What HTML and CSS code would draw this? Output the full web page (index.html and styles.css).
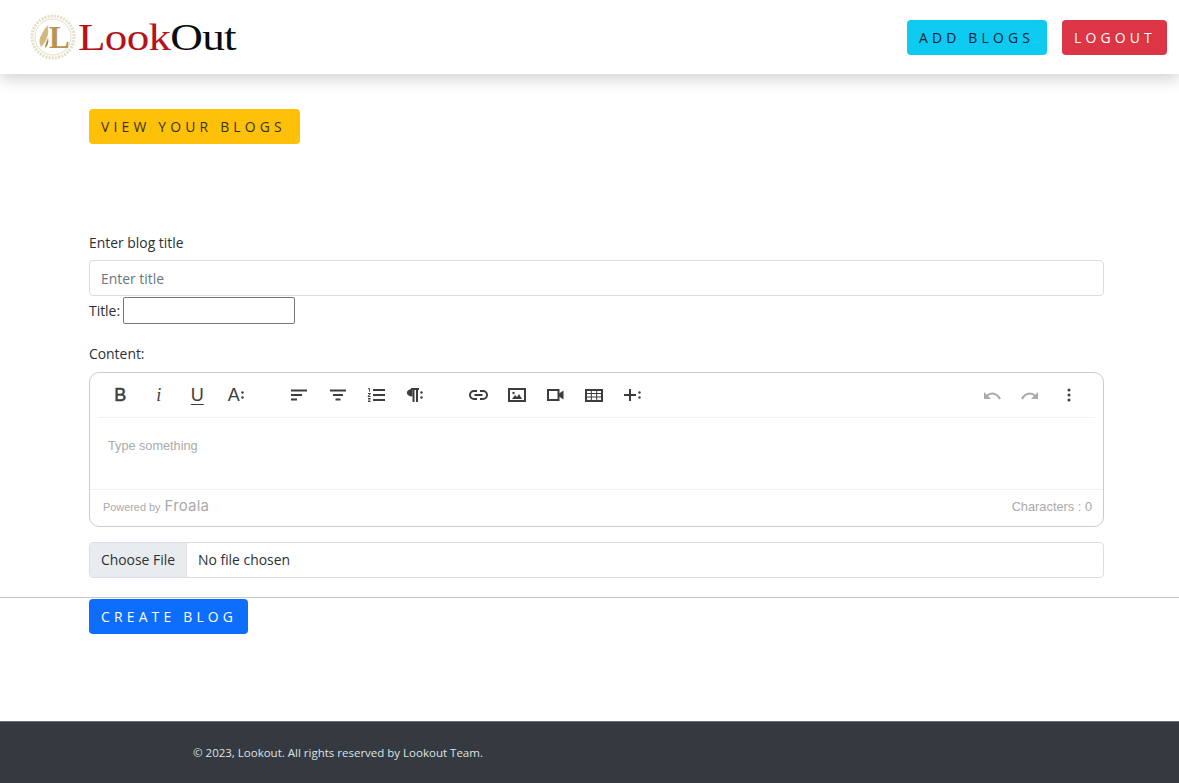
FILE: index.html
```html
<!DOCTYPE html>
<html lang="en">
<head>
<meta charset="utf-8">
<title>LookOut</title>
<link rel="stylesheet" href="styles.css">
</head>
<body>
<header class="topbar">
  <a class="logo" href="#">
    <svg class="logo-mark" width="46" height="46" viewBox="0 0 46 46">
      <circle cx="23" cy="23" r="21" fill="#fff" stroke="#e3dfc6" stroke-width="3" stroke-dasharray="2 1.2"/>
      <circle cx="23" cy="23" r="18" fill="none" stroke="#e2dec6" stroke-width="1"/>
      <path d="M11 33c-3-6-1-10 1-13 1-3 3-6 6-9-1 3 1 6 0 9-1 5-3 9-7 13z" fill="#d4b97f"/>
      <path d="M15 34c0-4 2-7 3-10 1 3 0 8-3 10z" fill="#a98a4e"/>
      <text x="19" y="34" class="logo-letter">L</text>
    </svg>
    <span class="logo-text"><span class="logo-red">Look</span>Out</span>
  </a>
  <nav class="top-actions">
    <a class="btn btn-info" href="#">ADD BLOGS</a>
    <a class="btn btn-danger" href="#">LOGOUT</a>
  </nav>
</header>

<main class="page">
  <div class="container">
    <a class="btn btn-warning" href="#">VIEW YOUR BLOGS</a>
    <label class="field-label" for="blog-title">Enter blog title</label>
    <input class="form-control" id="blog-title" type="text" placeholder="Enter title">
    <div class="title-row">
      <label for="title-raw">Title:</label>
      <input class="raw-input" id="title-raw" type="text">
    </div>
    <div class="content-label">Content:</div>
    <section class="editor">
      <div class="toolbar">
        <div class="tool-group group-text">
          <button class="tool" type="button"><span class="g g-b">B</span></button>
          <button class="tool" type="button"><span class="g g-i">i</span></button>
          <button class="tool" type="button"><span class="g g-u">U</span></button>
          <button class="tool" type="button"><span class="g g-a">A</span><svg class="more" width="3" height="10" viewBox="0 0 3 10"><circle cx="1.5" cy="2.5" r="1.2"/><circle cx="1.5" cy="7.5" r="1.2"/></svg></button>
        </div>
        <div class="tool-group group-para">
          <button class="tool" type="button"><svg width="18" height="12" viewBox="0 0 18 12"><path d="M1 1.500h16M1 6h11M1 10.500h6" class="ln"/></svg></button>
          <button class="tool" type="button"><svg width="18" height="12" viewBox="0 0 18 12"><path d="M1 1.500h16M4 6h10M6.500 10.500h5" class="ln"/></svg></button>
          <button class="tool" type="button"><svg width="18" height="14" viewBox="0 0 18 14"><path d="M6 2h12M6 7h12M6 12h12" class="ln"/><path d="M1 .6h1.500v3M1 5.500h2.500L1 8.500h2.500M1 10.500h2.500M1 12h2.500M1 13.500h2.500" class="ln-thin"/></svg></button>
          <button class="tool" type="button"><svg width="13" height="14" viewBox="0 0 13 14"><path d="M5 1h8M7.500 1v13M11 1v13" class="ln"/><path d="M6.500 1C-1 1-1 8.500 6.500 8.500z" class="fill"/></svg><svg class="more" width="3" height="10" viewBox="0 0 3 10"><circle cx="1.500" cy="2.500" r="1.200"/><circle cx="1.500" cy="7.500" r="1.200"/></svg></button>
        </div>
        <div class="tool-group group-insert">
          <button class="tool" type="button"><svg width="19" height="10" viewBox="0 0 19 10"><path d="M8 1H5a4 4 0 0 0 0 8h3M11 1h3a4 4 0 0 1 0 8h-3M5.500 5h8" class="ln"/></svg></button>
          <button class="tool" type="button"><svg width="18" height="14" viewBox="0 0 18 14"><rect x="1" y="1" width="16" height="12" class="box"/><path d="M4 11l3-4 2 2 2-3 3 5z" class="fill"/><circle cx="5.500" cy="5" r="1.200" class="fill"/></svg></button>
          <button class="tool" type="button"><svg width="17" height="12" viewBox="0 0 17 12"><rect x="1" y="1" width="10.500" height="10" class="box"/><path d="M12 4.500L16.500 1.500v9L12 7.500z" class="fill"/></svg></button>
          <button class="tool" type="button"><svg width="18" height="13" viewBox="0 0 18 13"><rect x="1" y="1" width="16" height="11" class="box"/><path d="M1 4.500h16M1 8h16M6.300 1v11M11.700 1v11" class="ln-thin"/></svg></button>
          <button class="tool" type="button"><svg width="14" height="14" viewBox="0 0 14 14"><path d="M7 1v12M1 7h12" class="ln"/></svg><svg class="more" width="3" height="10" viewBox="0 0 3 10"><circle cx="1.500" cy="2.500" r="1.200"/><circle cx="1.500" cy="7.500" r="1.200"/></svg></button>
        </div>
        <div class="tool-group group-history">
          <button class="tool" type="button"><svg width="18" height="9" viewBox="0 0 18 9"><path d="M17 8C14 2 8 1 3.500 5" class="ln-muted"/><path d="M1 1v7h7z" class="fill-muted"/></svg></button>
          <button class="tool" type="button"><svg width="18" height="9" viewBox="0 0 18 9"><path d="M1 8C4 2 10 1 14.500 5" class="ln-muted"/><path d="M17 1v7h-7z" class="fill-muted"/></svg></button>
          <button class="tool" type="button"><svg width="4" height="14" viewBox="0 0 4 14"><circle cx="2" cy="2" r="1.500"/><circle cx="2" cy="7" r="1.500"/><circle cx="2" cy="12" r="1.500"/></svg></button>
        </div>
      </div>
      <div class="editor-body">Type something</div>
      <div class="editor-foot">
        <span class="powered">Powered by <span class="froala">Froala</span></span>
        <span class="counter">Characters : 0</span>
      </div>
    </section>
    <div class="file-input">
      <span class="file-btn">Choose File</span>
      <span class="file-name">No file chosen</span>
    </div>
  </div>
  <hr class="rule">
  <div class="container">
    <button class="btn btn-primary" type="button">CREATE BLOG</button>
  </div>
</main>

<footer class="footer">
  <p>© 2023, Lookout. All rights reserved by Lookout Team.</p>
</footer>
</body>
</html>
```
FILE: styles.css
```css
* { box-sizing: border-box; }
html, body { margin: 0; padding: 0; }
body {
  height: 783px;
  display: flex;
  flex-direction: column;
  overflow: hidden;
  background: #fff;
  color: #2b3035;
  font-family: "Open Sans", "Noto Sans", sans-serif;
  font-size: 13.900px;
}
.topbar {
  height: 74px;
  flex: none;
  display: flex;
  align-items: center;
  justify-content: space-between;
  padding: 0 12px 0 30px;
  background: #fff;
  box-shadow: 0 4px 16px rgba(0, 0, 0, .2);
  position: relative;
}
.logo { display: flex; align-items: center; gap: 2px; text-decoration: none; color: #0b0b0b; }
.logo-mark { display: block; }
.logo-letter { font-family: "Liberation Serif", serif; font-size: 31px; font-weight: 700; fill: #b8944f; }
.logo-text {
  font-family: "Liberation Serif", serif;
  font-size: 37px;
  line-height: 1;
  letter-spacing: -.6px;
  transform: scaleX(1.22);
  transform-origin: left center;
}
.logo-red { color: #b5121b; }
.top-actions { display: flex; gap: 15px; margin-top: 1px; }
.btn {
  display: inline-flex;
  align-items: center;
  height: 35px;
  padding: 0 12px;
  border: 0;
  border-radius: 4px;
  font-family: "Open Sans", "Noto Sans", sans-serif;
  font-size: 13.900px;
  letter-spacing: 4.200px;
  text-decoration: none;
  white-space: nowrap;
}
.btn-info { background: #0dcaf0; color: #123; width: 140px; }
.btn-danger { background: #dc3545; color: #fff; width: 105px; }
.btn-warning { background: #ffc107; color: #332; width: 211px; }
.btn-primary { background: #0d6efd; color: #fff; width: 159px; }
.page { flex: 1; padding-top: 35px; }
.container { margin: 0 75px 0 89px; }
.container > .btn { display: flex; }
.field-label { display: block; margin-top: 89px; line-height: 20px; }
.form-control {
  display: block;
  width: 100%;
  height: 36px;
  margin-top: 7px;
  padding: 0 11px;
  border: 1px solid #dadee2;
  border-radius: 4px;
  font: inherit;
  color: #212529;
}
.form-control::placeholder { color: #6c757d; opacity: 1; }
.title-row { display: flex; align-items: center; gap: 3px; height: 28px; }
.raw-input {
  width: 172px;
  height: 27px;
  border: 1px solid #767676;
  border-radius: 2px;
  font: inherit;
}
.content-label { margin-top: 20px; line-height: 20px; }
.editor {
  height: 155px;
  margin-top: 8px;
  border: 1px solid #ccc;
  border-radius: 10px;
  display: flex;
  flex-direction: column;
  overflow: hidden;
}
.toolbar {
  height: 45px;
  margin: 0 8px;
  display: flex;
  align-items: center;
  border-bottom: 1px solid #f1f1f1;
  flex: none;
}
.tool-group { display: flex; align-items: center; }
.group-text { margin-left: 3px; }
.group-para { margin-left: 25px; }
.group-insert { margin-left: 25px; }
.group-history { margin-left: auto; margin-right: 7px; }
.tool {
  width: 38.500px;
  height: 34px;
  padding: 0;
  border: 0;
  background: none;
  display: flex;
  align-items: center;
  justify-content: center;
  gap: 1px;
  fill: #3d3d3d;
}
.g { font-family: "Liberation Sans", Arial, sans-serif; font-size: 18px; line-height: 1; color: #3d3d3d; }
.g-b { -webkit-text-stroke: .5px #3d3d3d; }
.g-i { font-family: "Liberation Serif", serif; font-style: italic; }
.g-u { text-decoration: underline; text-underline-offset: 3px; }
.ln { fill: none; stroke: #3d3d3d; stroke-width: 2; }
.ln-thin { fill: none; stroke: #3d3d3d; stroke-width: 1; }
.box { fill: none; stroke: #3d3d3d; stroke-width: 2; }
.fill { fill: #3d3d3d; }
.ln-muted { fill: none; stroke: #aaa; stroke-width: 2; }
.fill-muted { fill: #aaa; }
.more { fill: #3d3d3d; }
.editor-body {
  flex: 1;
  padding: 20px 18px 0;
  font-family: "Liberation Sans", Arial, sans-serif;
  font-size: 12.700px;
  line-height: 16px;
  color: #aaa;
}
.editor-foot {
  height: 37px;
  flex: none;
  display: flex;
  align-items: center;
  justify-content: space-between;
  padding: 0 11px 3px 13px;
  border-top: 1px solid #f1f1f1;
  font-family: "Liberation Sans", Arial, sans-serif;
  color: #aaa;
}
.powered { display: flex; align-items: center; gap: 4px; font-size: 10.900px; }
.froala { font-family: "Inter", sans-serif; font-size: 15px; letter-spacing: .2px; line-height: 14px; color: #aaa; margin-top: -2px; }
.counter { font-size: 12.800px; }
.file-input {
  display: flex;
  align-items: stretch;
  height: 36px;
  margin-top: 15px;
  border: 1px solid #dadee2;
  border-radius: 4px;
  overflow: hidden;
  line-height: 34px;
}
.file-btn { width: 97px; padding-left: 11px; background: #e9ecef; border-right: 1px solid #dee2e6; }
.file-name { padding-left: 11px; }
.rule { margin: 19px 0 1px; border: 0; border-top: 1px solid #c6c8ca; }
.footer {
  height: 62px;
  flex: none;
  display: flex;
  align-items: center;
  padding: 0 0 0 193px;
  background: #343a40;
  border-top: 1px solid #6b6f74;
  color: #dee2e6;
  font-size: 11.500px;
}
.footer p { margin: 0; }
```
